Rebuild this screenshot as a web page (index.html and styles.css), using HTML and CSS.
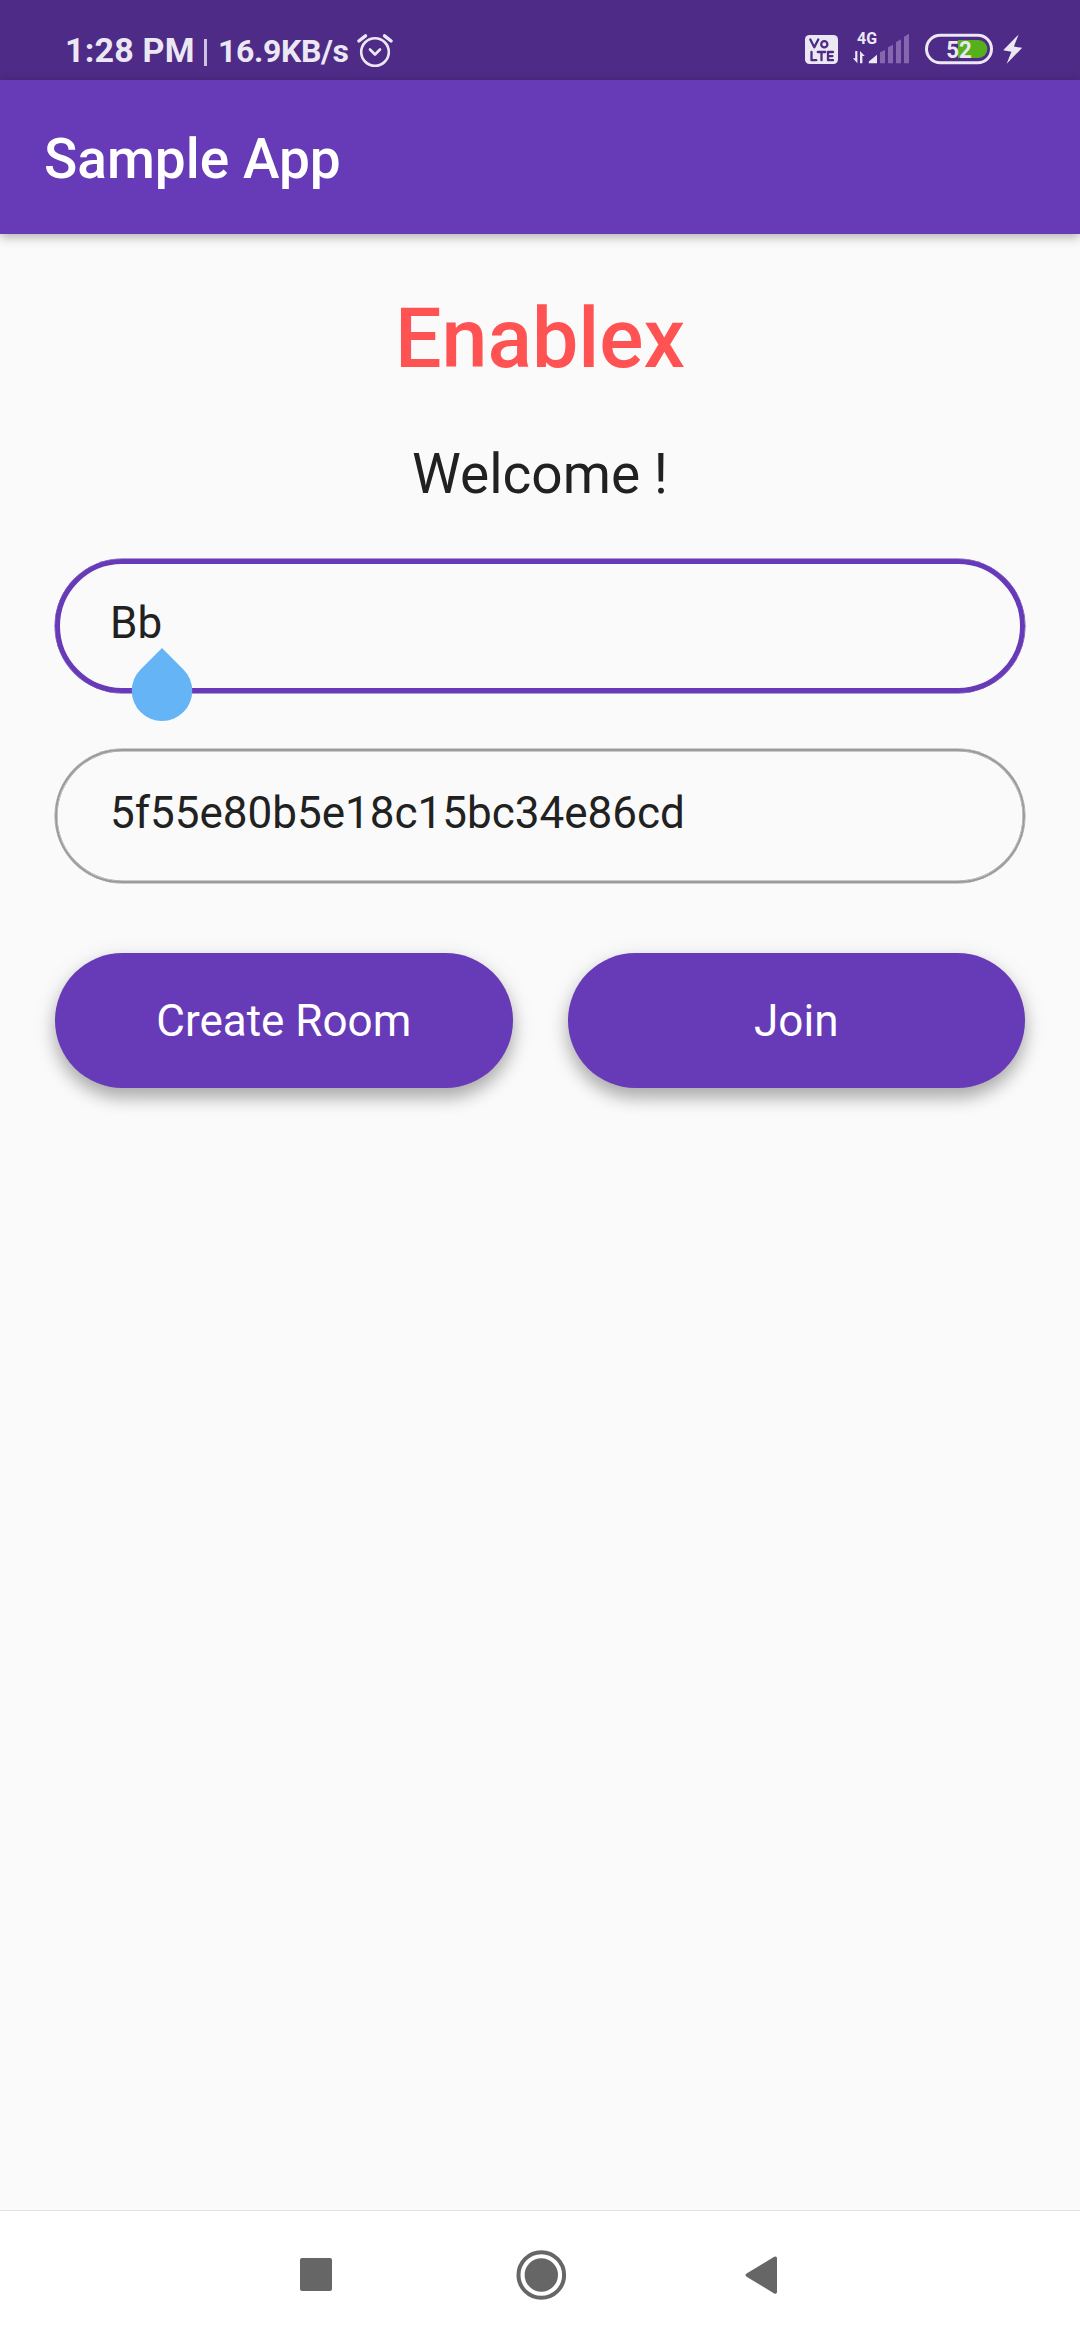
FILE: index.html
```html
<!DOCTYPE html>
<html lang="en">
<head>
<meta charset="utf-8">
<title>Sample App</title>
<link rel="stylesheet" href="styles.css">
</head>
<body>
<div class="screen">
  <div class="status-bar">
    <div class="status-left">
      <span class="clock">1:28 PM</span>
      <span class="divider"></span>
      <span class="speed">16.9KB/s</span>
      <svg class="alarm" width="38" height="38" viewBox="0 0 38 38" fill="none" stroke="currentColor" stroke-linecap="round" stroke-linejoin="round">
        <circle cx="19" cy="21" r="13.8" stroke-width="2.6"/>
        <path d="M14 18.5l5 5 5-5" stroke-width="2.7"/>
        <path d="M2.9 10l6.6-5.2M35.1 10l-6.6-5.2" stroke-width="3.4"/>
      </svg>
    </div>
    <svg class="status-right" width="230" height="44" viewBox="800 28 230 44">
      <rect x="805" y="35" width="33" height="29" rx="4.5" fill="#ece8f3"/>
      <g fill="none" stroke="#4d2b87" stroke-width="2.3" stroke-linecap="round" stroke-linejoin="round">
        <path d="M810.3 39.5l4 7.8 4-7.8"/>
        <circle cx="824.3" cy="44.2" r="3.1"/>
        <path d="M811.5 52v8.2h4.8M817.8 52h7.4M821.5 52v8.2M833 52h-5v8.2h5M828 56.1h4.5"/>
      </g>
      <text class="net-type" x="857" y="44.4" textLength="20" lengthAdjust="spacingAndGlyphs">4G</text>
      <path fill="#ece8f3" d="M855.2 51h2.2v12.2l-4.5-5h2.3zM860 51l4.8 5h-2.4v7.2H860zM877 54.7v8.5h-8.2v-1.8z"/>
      <g fill="#8467ae">
        <path d="M880 52.3l5-2.3v13.2h-5zM888 47.2l5-2.4v18.4h-5zM896 42l5-2.8v24h-5zM904 36.8l5-3v29.4h-5z"/>
      </g>
      <path fill="#56b01e" d="M958 40h20.4a9 9 0 0 1 0 18H958z"/>
      <rect x="926.5" y="35.3" width="65" height="27.4" rx="13.7" fill="none" stroke="#ece8f3" stroke-width="3"/>
      <text class="battery-level" x="946.2" y="57.5" textLength="25.6" lengthAdjust="spacingAndGlyphs">52</text>
      <path fill="#ece8f3" d="M1018.6 34.5l-15.4 15.8 8.2 1.5-4.7 11.9 15.5-15.9-8.3-1.2z"/>
    </svg>
  </div>

  <header class="app-bar"><h1 class="app-title">Sample App</h1></header>

  <main class="content">
    <h2 class="brand">Enablex</h2>
    <p class="welcome">Welcome !</p>
    <div class="field field-focused">
      <span>Bb</span>
      <svg class="handle" width="62" height="74" viewBox="0 0 62 74"><path fill="#64b4f6" d="M31 0L52.2 21.2A30.25 30.25 0 1 1 9.8 21.2z"/></svg>
    </div>
    <div class="field"><span>5f55e80b5e18c15bc34e86cd</span></div>
    <div class="actions">
      <button class="btn" type="button">Create Room</button>
      <button class="btn" type="button">Join</button>
    </div>
  </main>

  <nav class="nav-bar">
    <svg width="56" height="56" viewBox="0 0 56 56"><rect x="12" y="11" width="32" height="33" rx="2"/></svg>
    <svg width="56" height="56" viewBox="0 0 56 56"><circle cx="28.3" cy="28" r="22.8" fill="none" stroke="#666" stroke-width="4"/><circle cx="28.3" cy="28" r="16.7"/></svg>
    <svg width="56" height="56" viewBox="0 0 56 56"><path d="M9.6 26.5L37.2 9.8q2.8-.9 2.8 1.7v33.4q0 2.6-2.8 1.5L9.6 29.7q-2.2-1.6 0-3.2z"/></svg>
  </nav>
</div>
</body>
</html>
```
FILE: styles.css
```css
* { box-sizing: border-box; }

body {
  margin: 0;
  font-family: Roboto, sans-serif;
  color: #212121;
}

.screen {
  display: flex;
  flex-direction: column;
  width: 1080px;
  height: 2340px;
  background: #fafafa;
  overflow: hidden;
}

.status-bar {
  display: flex;
  justify-content: space-between;
  height: 80px;
  padding: 28px 50px 0 65px;
  background: #4d2b87;
  color: #ece8f3;
  font-weight: 700;
}

.status-left {
  display: flex;
  height: 44px;
  align-items: baseline;
  white-space: nowrap;
}

.clock { width: 130px; font-size: 34px; line-height: 44px; letter-spacing: .2px; }
.divider {
  align-self: flex-start;
  width: 3px;
  height: 27px;
  margin: 11px 11px 0 9px;
  background: #cdc2df;
}
.speed { width: 132px; font-size: 32px; line-height: 44px; letter-spacing: -.35px; }
.alarm { align-self: flex-start; margin: 3px 0 0 6px; }

.status-right { display: block; }
.net-type { font: 700 16px Roboto, sans-serif; fill: #ece8f3; }
.battery-level { font: 700 23px Roboto, sans-serif; fill: #ece8f3; }

.app-bar {
  display: flex;
  align-items: center;
  height: 154px;
  padding: 4px 44px 0;
  background: #673ab7;
  box-shadow: 0 3px 10px rgba(0, 0, 0, .3);
}

.app-title {
  margin: 0;
  color: #fff;
  font-size: 55px;
  font-weight: 500;
  line-height: 64px;
}

.content {
  flex: 1;
  padding: 56px 55px 0;
}

.brand {
  margin: 0;
  color: #ff5252;
  font-size: 82.5px;
  font-weight: 500;
  line-height: 97px;
  text-align: center;
}

.welcome {
  margin: 55px 0 0;
  font-size: 55px;
  line-height: 64px;
  text-align: center;
}

.field {
  position: relative;
  height: 134px;
  margin-top: 56px;
  padding: 36px 53px 0;
  border: 2px solid #9b9b9b;
  border-radius: 67px;
  box-shadow: 0 0 0 .5px #9b9b9b, inset 0 0 0 .5px #9b9b9b;
  font-size: 44px;
  line-height: 52px;
}

.field-focused {
  margin-top: 53px;
  padding: 33px 50px 0;
  border: 5px solid #673ab7;
  box-shadow: 0 0 0 .5px #673ab7;
}

.handle {
  position: absolute;
  left: 71px;
  top: 84px;
}

.actions {
  display: grid;
  grid-template-columns: 1fr 1fr;
  gap: 55px;
  margin-top: 70px;
}

.btn {
  height: 135px;
  padding: 0;
  border: 0;
  border-radius: 68px;
  background: #673ab7;
  box-shadow: 0 10px 16px rgba(0, 0, 0, .24), 0 6px 24px rgba(0, 0, 0, .12);
  color: #fff;
  font: 400 44px/52px Roboto, sans-serif;
}

.nav-bar {
  display: flex;
  justify-content: space-between;
  height: 130px;
  padding: 36px 287px 0 288px;
  border-top: 1px solid #e2e2e2;
  background: #fff;
  fill: #666;
}
```
